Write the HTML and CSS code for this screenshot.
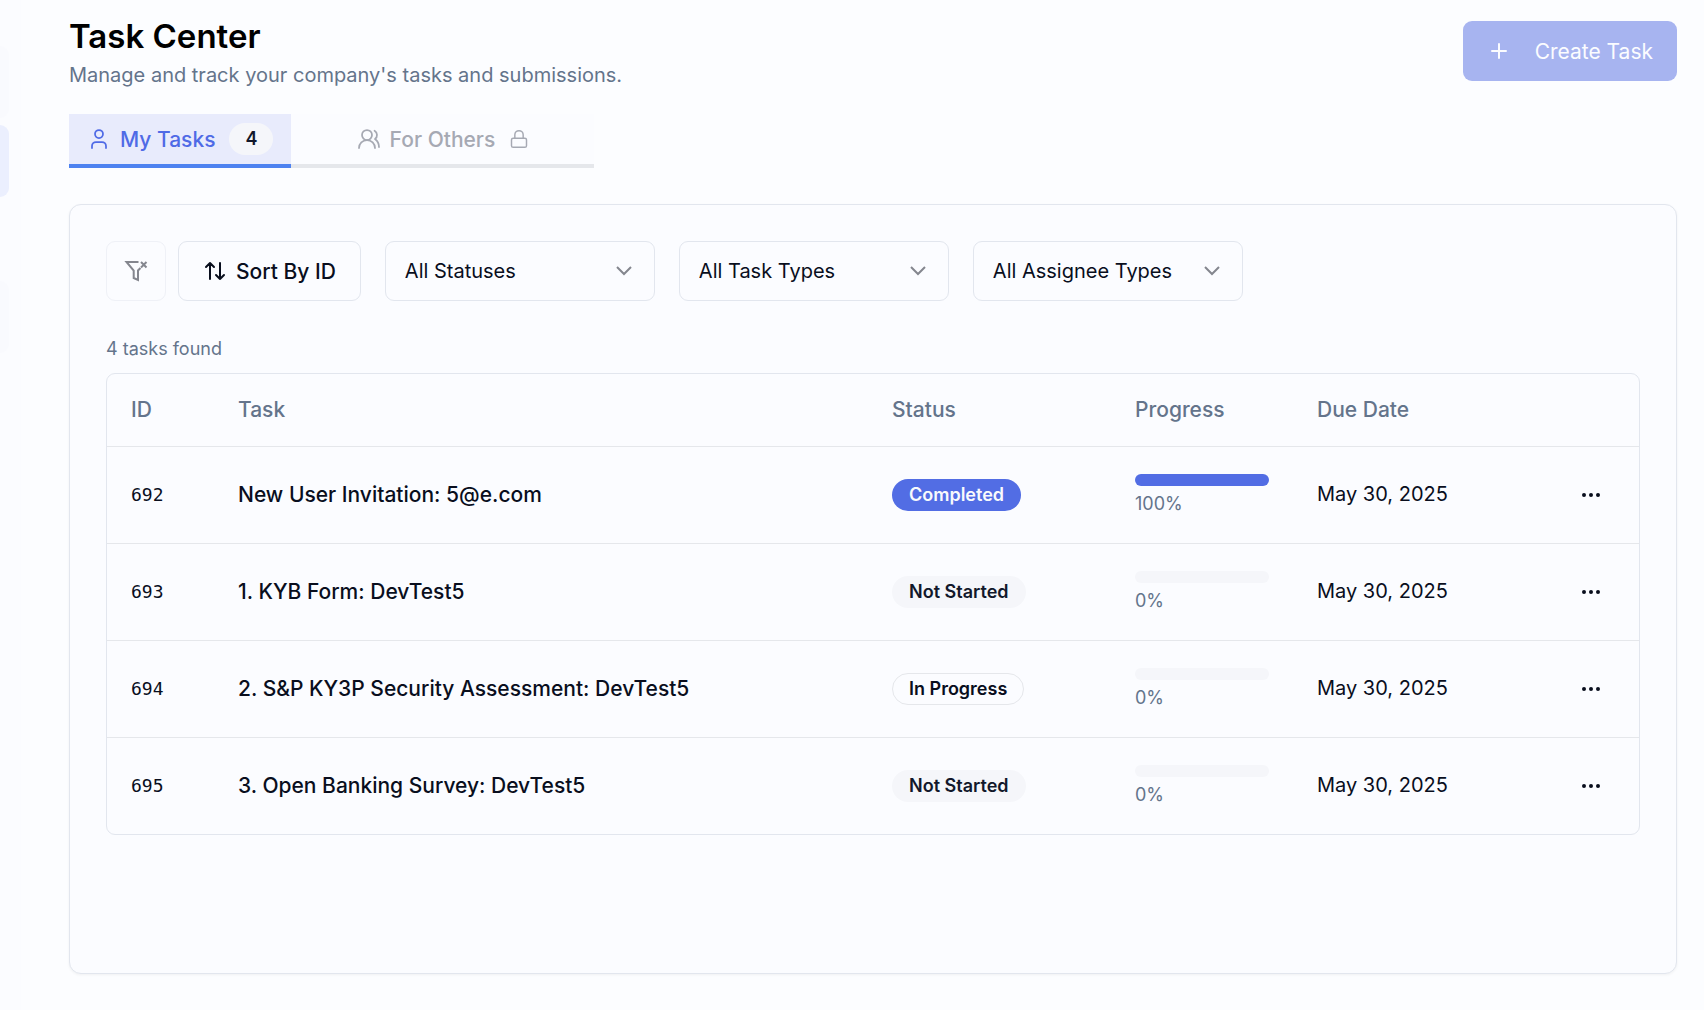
FILE: index.html
```html
<!DOCTYPE html>
<html lang="en">
<head>
<meta charset="utf-8">
<meta name="viewport" content="width=device-width, initial-scale=1">
<title>Task Center</title>
<link rel="stylesheet" href="styles.css">
</head>
<body>
<svg class="sprite" aria-hidden="true">
  <symbol id="chevron" viewBox="0 0 24 24"><path d="m5 8 7 7 7-7"/></symbol>
  <symbol id="dots" viewBox="0 0 24 24"><circle cx="12" cy="12" r="1"/><circle cx="19" cy="12" r="1"/><circle cx="5" cy="12" r="1"/></symbol>
</svg>
<div class="app">
  <nav class="rail" aria-label="Main">
    <a class="rail-item" href="#dashboard" aria-label="Dashboard"></a>
    <a class="rail-item active" href="#tasks" aria-label="Task Center"></a>
    <a class="rail-item spaced" href="#network" aria-label="Network"></a>
  </nav>
  <main class="main">
    <header class="header">
      <div>
        <h1 class="title">Task Center</h1>
        <p class="subtitle">Manage and track your company's tasks and submissions.</p>
      </div>
      <button class="create" type="button" disabled>
        <svg class="icon" viewBox="0 0 24 24"><path d="M5 12h14M12 5v14"/></svg>
        <span>Create Task</span>
      </button>
    </header>

    <div class="tabs" role="tablist">
      <button class="tab selected" type="button" role="tab" aria-selected="true">
        <svg class="icon" viewBox="0 0 24 24"><path d="M19 21v-2a4 4 0 0 0-4-4H9a4 4 0 0 0-4 4v2"/><circle cx="12" cy="7" r="4"/></svg>
        <span>My Tasks</span>
        <span class="badge muted count">4</span>
      </button>
      <button class="tab locked" type="button" role="tab" aria-selected="false" disabled>
        <svg class="icon" viewBox="0 0 24 24"><path d="M18 21a8 8 0 0 0-16 0"/><circle cx="10" cy="8" r="5"/><path d="M22 20c0-3.37-2-6.5-4-8a5 5 0 0 0-.45-8.3"/></svg>
        <span>For Others</span>
        <svg class="icon lock" viewBox="0 0 24 24"><rect x="3" y="11" width="18" height="11" rx="2"/><path d="M7 11V7a5 5 0 0 1 10 0v4"/></svg>
      </button>
    </div>

    <section class="card">
      <div class="toolbar">
        <div class="tools">
          <button class="btn clear" type="button" aria-label="Clear filters" disabled>
            <svg class="icon" viewBox="0 0 24 24"><path d="M14.500 3H2.500L9.700 11.500V19L14 21V11.500L16.500 9"/><path d="m17 3 5.500 5.500m0-5.500L17 8.500"/></svg>
          </button>
          <button class="btn sort" type="button">
            <svg class="icon" viewBox="0 0 24 24"><path d="m21 16-4 4-4-4M17 20V4M3 8l4-4 4 4M7 4v16"/></svg>
            <span>Sort By ID</span>
          </button>
        </div>
        <div class="select">
          <select aria-label="Status"><option>All Statuses</option></select>
          <svg class="chevron"><use href="#chevron"/></svg>
        </div>
        <div class="select">
          <select aria-label="Task type"><option>All Task Types</option></select>
          <svg class="chevron"><use href="#chevron"/></svg>
        </div>
        <div class="select">
          <select aria-label="Assignee type"><option>All Assignee Types</option></select>
          <svg class="chevron"><use href="#chevron"/></svg>
        </div>
      </div>

      <p class="found">4 tasks found</p>

      <div class="table-wrap">
        <table class="table">
          <colgroup><col class="c-id"><col><col class="c-status"><col class="c-progress"><col class="c-due"><col class="c-menu"></colgroup>
          <thead>
            <tr><th scope="col">ID</th><th scope="col">Task</th><th scope="col">Status</th><th scope="col">Progress</th><th scope="col">Due Date</th><td></td></tr>
          </thead>
          <tbody>
            <tr>
              <td class="id">692</td>
              <td class="name">New User Invitation: 5@e.com</td>
              <td><span class="badge solid">Completed</span></td>
              <td><div class="bar"><div class="fill" style="width:100%"></div></div><div class="percent">100%</div></td>
              <td class="due">May 30, 2025</td>
              <td><button class="menu" type="button" aria-label="Actions for task 692"><svg class="icon"><use href="#dots"/></svg></button></td>
            </tr>
            <tr>
              <td class="id">693</td>
              <td class="name">1. KYB Form: DevTest5</td>
              <td><span class="badge muted">Not Started</span></td>
              <td><div class="bar"><div class="fill" style="width:0%"></div></div><div class="percent">0%</div></td>
              <td class="due">May 30, 2025</td>
              <td><button class="menu" type="button" aria-label="Actions for task 693"><svg class="icon"><use href="#dots"/></svg></button></td>
            </tr>
            <tr>
              <td class="id">694</td>
              <td class="name">2. S&amp;P KY3P Security Assessment: DevTest5</td>
              <td><span class="badge outline">In Progress</span></td>
              <td><div class="bar"><div class="fill" style="width:0%"></div></div><div class="percent">0%</div></td>
              <td class="due">May 30, 2025</td>
              <td><button class="menu" type="button" aria-label="Actions for task 694"><svg class="icon"><use href="#dots"/></svg></button></td>
            </tr>
            <tr>
              <td class="id">695</td>
              <td class="name">3. Open Banking Survey: DevTest5</td>
              <td><span class="badge muted">Not Started</span></td>
              <td><div class="bar"><div class="fill" style="width:0%"></div></div><div class="percent">0%</div></td>
              <td class="due">May 30, 2025</td>
              <td><button class="menu" type="button" aria-label="Actions for task 695"><svg class="icon"><use href="#dots"/></svg></button></td>
            </tr>
          </tbody>
        </table>
      </div>
    </section>
  </main>
</div>
</body>
</html>
```

FILE: styles.css
```css
* { box-sizing: border-box; }

body {
  margin: 0;
  background: #fcfdff;
  color: #090e1d;
  font-family: Inter, "Liberation Sans", sans-serif;
  font-size: 21px;
  line-height: 31px;
}

h1, p { margin: 0; }

button, select {
  margin: 0;
  font: inherit;
  color: inherit;
}

.sprite { display: none; }

.icon {
  flex: none;
  width: 24px;
  height: 24px;
  fill: none;
  stroke: currentColor;
  stroke-width: 2;
  stroke-linecap: round;
  stroke-linejoin: round;
}

.app {
  display: flex;
  min-height: 100vh;
}

/* Collapsed navigation edge */
.rail {
  flex: none;
  width: 21px;
  padding: 46px 12px 0 0;
  background: #fbfcff;
}
.rail-item {
  display: block;
  height: 72px;
  margin-bottom: 7px;
  border-radius: 0 12px 12px 0;
  background: #f9fafe;
}
.rail-item.active { background: #ebeffe; }
.rail-item.spaced { margin-top: 84px; }

.main {
  flex: 1;
  min-width: 0;
  display: flex;
  flex-direction: column;
  padding: 21px 27px 36px 48px;
}

.header {
  display: flex;
  justify-content: space-between;
  align-items: flex-start;
}
.title {
  color: #000;
  font-size: 33px;
  font-weight: 600;
  line-height: 31px;
}
.subtitle {
  margin-top: 8px;
  color: #64748b;
  font-size: 20px;
}
.create {
  display: flex;
  align-items: center;
  gap: 24px;
  height: 60px;
  padding: 0 24px;
  border: 0;
  border-radius: 9px;
  background: #a7b4f0;
  color: #fbfcff;
}

.tabs {
  display: flex;
  margin-top: 23px;
}
.tab {
  display: flex;
  align-items: center;
  justify-content: center;
  gap: 9px;
  height: 54px;
  padding: 0 18px;
  border: 0;
  border-bottom: 4px solid #e5e7eb;
  background: #fbfcff;
  font-weight: 500;
}
.tab.selected {
  border-color: #4d82f0;
  background: #e8ebfc;
  color: #4f6ae6;
}
.tab.locked {
  width: 303px;
  color: #a6a9b3;
}
.tab .icon { stroke-width: 1.75; }
.tab .lock {
  width: 20px;
  height: 20px;
  margin-left: 5px;
}

.badge {
  display: inline-flex;
  align-items: center;
  height: 32px;
  padding: 0 16px;
  border: 1px solid transparent;
  border-radius: 16px;
  font-size: 18px;
  font-weight: 600;
  line-height: 24px;
  vertical-align: middle;
}
.badge.solid { background: #526de4; color: #f8fafc; }
.badge.muted { background: #f5f6fa; color: #12182b; }
.badge.outline { border-color: #e5e7eb; }
.badge.count {
  margin-left: 5px;
  padding: 0 15px;
}

.card {
  flex: 1;
  margin-top: 36px;
  padding: 36px;
  border: 1px solid #e2e6ee;
  border-radius: 12px;
  background: #fbfcff;
  box-shadow: 0 1px 3px rgba(0, 0, 0, 0.05);
}

.toolbar {
  display: flex;
  flex-wrap: wrap;
  gap: 24px;
}
.tools {
  display: flex;
  gap: 12px;
}
.btn {
  display: flex;
  align-items: center;
  justify-content: center;
  gap: 9px;
  height: 60px;
  padding: 0 24px;
  border: 1px solid #e2e6ee;
  border-radius: 9px;
  background: transparent;
  font-weight: 500;
}
.btn.clear {
  width: 60px;
  padding: 0;
  border-color: #eff1f7;
  color: #84868e;
}
.btn.clear .icon {
  stroke-linecap: butt;
  stroke-linejoin: miter;
}

.select {
  position: relative;
  width: 270px;
}
.select select {
  appearance: none;
  width: 100%;
  height: 60px;
  padding: 0 48px 0 19px;
  border: 1px solid #e2e6ee;
  border-radius: 9px;
  background: transparent;
  font-size: 20px;
}
.chevron {
  position: absolute;
  top: 18px;
  right: 19px;
  width: 24px;
  height: 24px;
  fill: none;
  stroke: #84868e;
  stroke-width: 2;
  pointer-events: none;
}

.found {
  margin-top: 36px;
  color: #64748b;
  font-size: 18px;
  line-height: 24px;
}

.table-wrap {
  margin-top: 12px;
  border: 1px solid #e2e6ee;
  border-radius: 9px;
}
.table {
  width: 100%;
  table-layout: fixed;
  border-collapse: collapse;
}
.c-id { width: 107px; }
.c-status { width: 243px; }
.c-progress { width: 182px; }
.c-due { width: 250px; }
.c-menu { width: 96px; }

.table th, .table td {
  padding: 0 24px;
  text-align: left;
  vertical-align: middle;
}
.table th {
  color: #64748b;
  font-weight: 500;
}
.table thead tr { height: 72px; }
.table tbody tr { height: 97px; }
.table tr { border-bottom: 1px solid #e5e7eb; }
.table tbody tr:last-child { border-bottom: 0; }
.table .id {
  font-family: "DejaVu Sans Mono", monospace;
  font-size: 18px;
}
.table .name { font-weight: 500; }
.table .due { font-size: 20px; }

.bar {
  height: 12px;
  overflow: hidden;
  border-radius: 6px;
  background: #f5f6fa;
}
.fill {
  height: 100%;
  background: #526de4;
}
.percent {
  margin-top: 6px;
  color: #64748b;
  font-size: 18px;
  line-height: 24px;
}

.menu {
  display: flex;
  align-items: center;
  justify-content: center;
  width: 48px;
  height: 48px;
  padding: 0;
  border: 0;
  background: transparent;
}
```
